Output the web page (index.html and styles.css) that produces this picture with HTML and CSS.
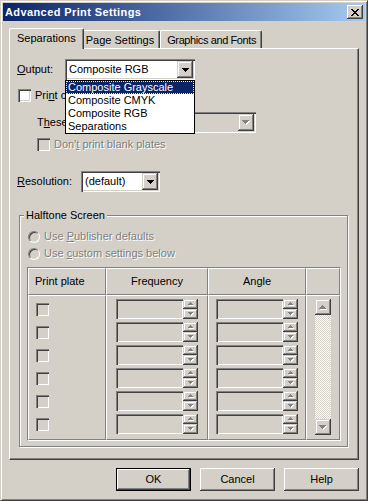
FILE: index.html
```html
<!DOCTYPE html>
<html lang="en">
<head>
  <meta charset="UTF-8">
  <title>Advanced Print Settings</title>
  <link rel="stylesheet" href="styles.css">
</head>
<body>
  <svg class="defs" width="0" height="0">
    <symbol id="arrow-down" viewBox="0 0 7 4"><path d="M0 0h7v1H0z M1 1h5v1H1z M2 2h3v1H2z M3 3h1v1H3z"/></symbol>
    <symbol id="arrow-down-dis" viewBox="0 0 8 5">
      <path fill="#fff" d="M1 1h7v1H1z M2 2h5v1H2z M3 3h3v1H3z M4 4h1v1H4z"/>
      <path fill="#808080" d="M0 0h7v1H0z M1 1h5v1H1z M2 2h3v1H2z M3 3h1v1H3z"/>
    </symbol>
    <symbol id="arrow-up-dis" viewBox="0 0 8 5">
      <path fill="#fff" d="M4 1h1v1H4z M3 2h3v1H3z M2 3h5v1H2z M1 4h7v1H1z"/>
      <path fill="#808080" d="M3 0h1v1H3z M2 1h3v1H2z M1 2h5v1H1z M0 3h7v1H0z"/>
    </symbol>
    <symbol id="tiny-up" viewBox="0 0 6 4">
      <path fill="#fff" d="M3 1h1v1H3z M2 2h3v1H2z M1 3h5v1H1z"/>
      <path fill="#808080" d="M2 0h1v1H2z M1 1h3v1H1z M0 2h5v1H0z"/>
    </symbol>
    <symbol id="tiny-down" viewBox="0 0 6 4">
      <path fill="#fff" d="M1 1h5v1H1z M2 2h3v1H2z M3 3h1v1H3z"/>
      <path fill="#808080" d="M0 0h5v1H0z M1 1h3v1H1z M2 2h1v1H2z"/>
    </symbol>
  </svg>

  <div class="window">
    <div class="titlebar">
      <span class="title">Advanced Print Settings</span>
      <span class="close-btn">
        <svg width="8" height="7" viewBox="0 0 8 7"><path d="M0 0h2v1H0z M6 0h2v1H6z M1 1h2v1H1z M5 1h2v1H5z M2 2h4v1H2z M3 3h2v1H3z M2 4h4v1H2z M1 5h2v1H1z M5 5h2v1H5z M0 6h2v1H0z M6 6h2v1H6z"/></svg>
      </span>
    </div>

    <div class="dlg-body">
      <div class="tabs">
        <div class="tab active">Separations</div>
        <div class="tab">Page Settings</div>
        <div class="tab tab-long">Graphics and Fonts</div>
      </div>

      <div class="panel">
        <div class="row row-output">
          <span class="lbl lbl-output"><u>O</u>utput:</span>
          <div class="combo combo-output">
            <span class="combo-text">Composite RGB</span>
            <span class="combo-btn"><svg width="7" height="4"><use href="#arrow-down"/></svg></span>
            <ul class="dropdown">
              <li class="sel">Composite Grayscale</li>
              <li>Composite CMYK</li>
              <li>Composite RGB</li>
              <li>Separations</li>
            </ul>
          </div>
        </div>

        <div class="row row-print">
          <span class="cb"></span>
          <span class="cb-text">Pri<u>n</u>t colors as black</span>
        </div>

        <div class="row row-plates">
          <span class="lbl lbl-plates">T<u>h</u>ese plates:</span>
          <div class="combo combo-plates disabled">
            <span class="combo-text"></span>
            <span class="combo-btn"><svg width="8" height="5"><use href="#arrow-down-dis"/></svg></span>
          </div>
        </div>

        <div class="row row-blank">
          <span class="cb disabled"></span>
          <span class="cb-text dis-text">Don'<u>t</u> print blank plates</span>
        </div>

        <div class="row row-res">
          <span class="lbl lbl-res"><u>R</u>esolution:</span>
          <div class="combo combo-res">
            <span class="combo-text">(default)</span>
            <span class="combo-btn"><svg width="7" height="4"><use href="#arrow-down"/></svg></span>
          </div>
        </div>

        <fieldset class="group">
          <legend>Halftone Screen</legend>

          <div class="radio-row">
            <span class="rb"></span>
            <span class="dis-text">Use <u>P</u>ublisher defaults</span>
          </div>
          <div class="radio-row">
            <span class="rb"></span>
            <span class="dis-text">Use <u>c</u>ustom settings below</span>
          </div>

          <div class="plates">
            <div class="cell head head-plate">Print plate</div>
            <div class="cell head">Frequency</div>
            <div class="cell head">Angle</div>
            <div class="cell head"></div>

            <div class="cell col-checks">
              <div class="line"><span class="cb disabled"></span></div>
              <div class="line"><span class="cb disabled"></span></div>
              <div class="line"><span class="cb disabled"></span></div>
              <div class="line"><span class="cb disabled"></span></div>
              <div class="line"><span class="cb disabled"></span></div>
              <div class="line"><span class="cb disabled"></span></div>
            </div>

            <div class="cell col-spins">
              <div class="spin"><span class="spin-edit"></span><span class="spin-btns"><span class="spin-btn"><svg width="6" height="4"><use href="#tiny-up"/></svg></span><span class="spin-btn"><svg width="6" height="4"><use href="#tiny-down"/></svg></span></span></div>
              <div class="spin"><span class="spin-edit"></span><span class="spin-btns"><span class="spin-btn"><svg width="6" height="4"><use href="#tiny-up"/></svg></span><span class="spin-btn"><svg width="6" height="4"><use href="#tiny-down"/></svg></span></span></div>
              <div class="spin"><span class="spin-edit"></span><span class="spin-btns"><span class="spin-btn"><svg width="6" height="4"><use href="#tiny-up"/></svg></span><span class="spin-btn"><svg width="6" height="4"><use href="#tiny-down"/></svg></span></span></div>
              <div class="spin"><span class="spin-edit"></span><span class="spin-btns"><span class="spin-btn"><svg width="6" height="4"><use href="#tiny-up"/></svg></span><span class="spin-btn"><svg width="6" height="4"><use href="#tiny-down"/></svg></span></span></div>
              <div class="spin"><span class="spin-edit"></span><span class="spin-btns"><span class="spin-btn"><svg width="6" height="4"><use href="#tiny-up"/></svg></span><span class="spin-btn"><svg width="6" height="4"><use href="#tiny-down"/></svg></span></span></div>
              <div class="spin"><span class="spin-edit"></span><span class="spin-btns"><span class="spin-btn"><svg width="6" height="4"><use href="#tiny-up"/></svg></span><span class="spin-btn"><svg width="6" height="4"><use href="#tiny-down"/></svg></span></span></div>
            </div>

            <div class="cell col-spins">
              <div class="spin"><span class="spin-edit"></span><span class="spin-btns"><span class="spin-btn"><svg width="6" height="4"><use href="#tiny-up"/></svg></span><span class="spin-btn"><svg width="6" height="4"><use href="#tiny-down"/></svg></span></span></div>
              <div class="spin"><span class="spin-edit"></span><span class="spin-btns"><span class="spin-btn"><svg width="6" height="4"><use href="#tiny-up"/></svg></span><span class="spin-btn"><svg width="6" height="4"><use href="#tiny-down"/></svg></span></span></div>
              <div class="spin"><span class="spin-edit"></span><span class="spin-btns"><span class="spin-btn"><svg width="6" height="4"><use href="#tiny-up"/></svg></span><span class="spin-btn"><svg width="6" height="4"><use href="#tiny-down"/></svg></span></span></div>
              <div class="spin"><span class="spin-edit"></span><span class="spin-btns"><span class="spin-btn"><svg width="6" height="4"><use href="#tiny-up"/></svg></span><span class="spin-btn"><svg width="6" height="4"><use href="#tiny-down"/></svg></span></span></div>
              <div class="spin"><span class="spin-edit"></span><span class="spin-btns"><span class="spin-btn"><svg width="6" height="4"><use href="#tiny-up"/></svg></span><span class="spin-btn"><svg width="6" height="4"><use href="#tiny-down"/></svg></span></span></div>
              <div class="spin"><span class="spin-edit"></span><span class="spin-btns"><span class="spin-btn"><svg width="6" height="4"><use href="#tiny-up"/></svg></span><span class="spin-btn"><svg width="6" height="4"><use href="#tiny-down"/></svg></span></span></div>
            </div>

            <div class="cell col-scroll">
              <div class="scrollbar">
                <span class="scroll-btn"><svg width="8" height="5"><use href="#arrow-up-dis"/></svg></span>
                <span class="scroll-track"></span>
                <span class="scroll-btn"><svg width="8" height="5"><use href="#arrow-down-dis"/></svg></span>
              </div>
            </div>
          </div>
        </fieldset>
      </div>

      <div class="buttons">
        <button class="btn default">OK</button>
        <button class="btn">Cancel</button>
        <button class="btn">Help</button>
      </div>
    </div>
  </div>
</body>
</html>
```

FILE: styles.css
```css
* {
  box-sizing: border-box;
}

body {
  margin: 0;
  background: #d4d0c8;
  font-family: 'Liberation Sans', Arial, sans-serif;
  font-size: 11px;
  line-height: 13px;
  color: #000;
}

.defs {
  position: absolute;
}

u {
  text-decoration: underline;
  text-underline-offset: 1px;
}

/* window frame */
.window {
  width: 368px;
  height: 501px;
  background: #d4d0c8;
  border: 1px solid;
  border-color: #d4d0c8 #404040 #404040 #d4d0c8;
  box-shadow: inset 1px 1px #fff, inset -1px -1px #808080;
  padding: 2px;
  display: flex;
  flex-direction: column;
}

.titlebar {
  height: 18px;
  flex: none;
  display: flex;
  align-items: center;
  padding-left: 2px;
  background: linear-gradient(to right, #0a246a, #a6caf0);
  color: #fff;
  font-weight: bold;
}

.title {
  flex: 1;
  letter-spacing: 0.4px;
}

.close-btn {
  width: 16px;
  height: 14px;
  margin-right: 2px;
  display: flex;
  align-items: center;
  justify-content: center;
  background: #d4d0c8;
  box-shadow: inset -1px -1px #404040, inset 1px 1px #fff, inset -2px -2px #808080;
}

.close-btn svg {
  margin-left: -1px;
  shape-rendering: crispEdges;
}

.dlg-body {
  flex: 1;
  padding: 7px 6px 0 6px;
  display: flex;
  flex-direction: column;
}

/* tabs */
.tabs {
  height: 20px;
  display: flex;
  align-items: flex-end;
  padding-left: 2px;
}

.tab {
  height: 18px;
  padding: 3px 5px 0 6px;
  border-top: 1px solid #fff;
  border-left: 1px solid #fff;
  border-right: 1px solid #404040;
  border-radius: 2px 2px 0 0;
  box-shadow: inset -1px 0 #808080;
  white-space: nowrap;
}

.tab.active {
  height: 21px;
  margin: 0 -2px -1px -2px;
  padding: 3px 7px 0 7px;
  position: relative;
  z-index: 1;
  background: #d4d0c8;
}

.tab.active + .tab {
  border-left: none;
  padding-left: 4px;
}

.tab-long {
  letter-spacing: -0.4px;
}

/* main panel */
.panel {
  height: 412px;
  padding-left: 7px;
  border-top: 1px solid #fff;
  border-left: 1px solid #fff;
  border-right: 1px solid #404040;
  border-bottom: 1px solid #404040;
  box-shadow: inset -1px -1px #808080;
}

.row {
  display: flex;
  align-items: center;
}

.row-output {
  margin-top: 10px;
  height: 21px;
}

.lbl-output {
  width: 48px;
}

.row-print {
  margin-top: 6px;
  height: 19px;
  padding-left: 1px;
}

.row-plates {
  margin-top: 7px;
  height: 21px;
  padding-left: 20px;
}

.lbl-plates {
  width: 73px;
}

.row-blank {
  margin-top: 2px;
  height: 19px;
  padding-left: 20px;
}

.row-res {
  margin-top: 17px;
  height: 21px;
}

.lbl-res {
  width: 64px;
}

.cb-text {
  margin-left: 4px;
}

.dis-text {
  color: #808080;
  text-shadow: 1px 1px #fff;
}

/* combo boxes */
.combo {
  position: relative;
  height: 21px;
  display: flex;
  padding: 2px;
  background: #fff;
  box-shadow: inset 1px 1px #808080, inset 2px 2px #404040, inset -1px -1px #fff, inset -2px -2px #d4d0c8;
}

.combo.disabled {
  background: #d4d0c8;
}

.combo-output {
  width: 130px;
}

.combo-plates {
  width: 146px;
}

.combo-res {
  width: 79px;
}

.combo-text {
  flex: 1;
  padding-left: 2px;
  line-height: 17px;
}

.combo-btn {
  width: 16px;
  height: 17px;
  display: flex;
  align-items: center;
  justify-content: center;
  background: #d4d0c8;
  box-shadow: inset -1px -1px #404040, inset 1px 1px #d4d0c8, inset -2px -2px #808080, inset 2px 2px #fff;
}

.combo-btn svg {
  shape-rendering: crispEdges;
}

/* open list of the Output combo, drawn over the rows below */
.dropdown {
  position: absolute;
  top: 21px;
  left: 0;
  z-index: 5;
  width: 130px;
  margin: 0;
  padding: 0;
  list-style: none;
  background: #fff;
  border: 1px solid #000;
}

.dropdown li {
  height: 13px;
  padding-left: 2px;
  white-space: nowrap;
}

.dropdown li.sel {
  background: #0a246a;
  color: #fff;
  outline: 1px dotted #f5e9a0;
  outline-offset: -1px;
}

/* check boxes and radios */
.cb {
  flex: none;
  display: block;
  width: 13px;
  height: 13px;
  background: #fff;
  box-shadow: inset 1px 1px #808080, inset 2px 2px #404040, inset -1px -1px #fff, inset -2px -2px #d4d0c8;
}

.cb.disabled {
  background: #d4d0c8;
}

.rb {
  flex: none;
  width: 12px;
  height: 12px;
  border-radius: 50%;
  border: 1px solid;
  border-color: #808080 #fff #fff #808080;
  box-shadow: inset 1px 1px #404040;
  background: #d4d0c8;
  margin-right: 4px;
}

/* halftone group */
.group {
  width: 329px;
  height: 238px;
  margin: 17px 0 0 2px;
  padding: 0;
  border: 1px solid #808080;
  box-shadow: inset 1px 1px #fff, 1px 1px #fff;
}

.group legend {
  margin-left: 4px;
  padding: 0 2px;
  background: #d4d0c8;
}

.radio-row {
  display: flex;
  align-items: center;
  height: 17px;
  padding-left: 8px;
}

.radio-row:first-of-type {
  margin-top: 6px;
}

/* plate table */
.plates {
  display: grid;
  grid-template-columns: 78px 102px 98px 34px;
  grid-template-rows: 27px 145px;
  width: 314px;
  margin: 5px 0 0 7px;
  border-top: 1px solid #808080;
  border-left: 1px solid #808080;
  border-right: 1px solid #fff;
  border-bottom: 1px solid #fff;
}

.cell {
  border-top: 1px solid #fff;
  border-left: 1px solid #fff;
  border-right: 1px solid #808080;
  border-bottom: 1px solid #808080;
}

.head {
  display: flex;
  align-items: center;
  justify-content: center;
}

.head-plate {
  justify-content: flex-start;
  padding-left: 6px;
}

.col-checks,
.col-spins {
  display: flex;
  flex-direction: column;
  gap: 3px;
  padding-top: 3px;
}

.col-checks {
  padding-left: 7px;
}

.col-spins {
  align-items: center;
}

.line {
  height: 20px;
  padding-top: 4px;
}

.spin {
  display: flex;
  height: 20px;
}

.spin-edit {
  width: 67px;
  height: 20px;
  background: #d4d0c8;
  box-shadow: inset 1px 1px #808080, inset 2px 2px #404040, inset -1px -1px #fff, inset -2px -2px #d4d0c8;
}

.spin-btns {
  display: flex;
  flex-direction: column;
}

.spin-btn {
  width: 15px;
  height: 10px;
  display: flex;
  align-items: center;
  justify-content: center;
  box-shadow: inset -1px -1px #404040, inset 1px 1px #d4d0c8, inset -2px -2px #808080, inset 2px 2px #fff;
}

.spin-btn svg,
.scroll-btn svg {
  shape-rendering: crispEdges;
}

.col-scroll {
  display: flex;
  justify-content: center;
  padding-top: 3px;
}

.scrollbar {
  width: 16px;
  height: 136px;
  display: flex;
  flex-direction: column;
}

.scroll-btn {
  height: 16px;
  display: flex;
  align-items: center;
  justify-content: center;
  background: #d4d0c8;
  box-shadow: inset -1px -1px #404040, inset 1px 1px #d4d0c8, inset -2px -2px #808080, inset 2px 2px #fff;
}

.scroll-track {
  flex: 1;
  background-image: repeating-conic-gradient(#fff 0 25%, #d4d0c8 0 50%);
  background-size: 2px 2px;
}

/* bottom buttons */
.buttons {
  display: flex;
  justify-content: flex-end;
  gap: 9px;
  margin-top: 8px;
}

.btn {
  width: 75px;
  height: 23px;
  padding: 0;
  border: none;
  background: #d4d0c8;
  font: inherit;
  color: #000;
  box-shadow: inset -1px -1px #404040, inset 1px 1px #fff, inset -2px -2px #808080;
}

.btn.default {
  border: 1px solid #000;
}
```
